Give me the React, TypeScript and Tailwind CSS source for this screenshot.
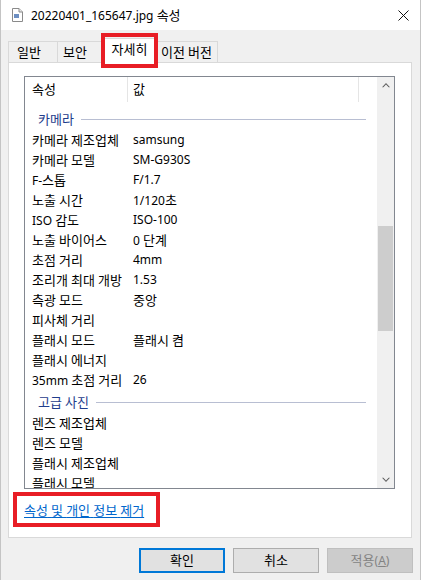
import React from 'react';

type Row = { label: string; value?: string };

const cameraRows: Row[] = [
  { label: '카메라 제조업체', value: 'samsung' },
  { label: '카메라 모델', value: 'SM-G930S' },
  { label: 'F-스톱', value: 'F/1.7' },
  { label: '노출 시간', value: '1/120초' },
  { label: 'ISO 감도', value: 'ISO-100' },
  { label: '노출 바이어스', value: '0 단계' },
  { label: '초점 거리', value: '4mm' },
  { label: '조리개 최대 개방', value: '1.53' },
  { label: '측광 모드', value: '중앙' },
  { label: '피사체 거리' },
  { label: '플래시 모드', value: '플래시 켬' },
  { label: '플래시 에너지' },
  { label: '35mm 초점 거리', value: '26' },
];

const advancedRows: Row[] = [
  { label: '렌즈 제조업체' },
  { label: '렌즈 모델' },
  { label: '플래시 제조업체' },
  { label: '플래시 모델' },
  { label: '플래시 일련 번호' },
];

// Hangul runs get a slightly larger size so they match Malgun Gothic widths
function K({ t }: { t: string }) {
  const parts = t.split(/([\uAC00-\uD7A3]+)/);
  return (
    <span className="whitespace-pre">
      {parts.map((p, i) =>
        /[\uAC00-\uD7A3]/.test(p) ? (
          <span key={i} className="text-[13px]">
            {p}
          </span>
        ) : (
          <React.Fragment key={i}>{p}</React.Fragment>
        ),
      )}
    </span>
  );
}

function GroupRow({ title }: { title: string }) {
  return (
    <div className="h-[23px] shrink-0 flex items-end pb-[3px] pl-[13px] pr-[11px]">
      <div className="flex items-center w-full h-[16px]">
        <span className="text-[#1e3c8c] whitespace-nowrap">
          <K t={title} />
        </span>
        <div className="flex-1 h-px bg-[#b8bed2] ml-[7px]" />
      </div>
    </div>
  );
}

function PropRow({ row }: { row: Row }) {
  return (
    <div className="h-[20px] shrink-0 flex items-center">
      <div className="w-[103px] pl-[7px] whitespace-nowrap overflow-hidden">
        <K t={row.label} />
      </div>
      <div className="pl-[5px] whitespace-nowrap">
        <K t={row.value ?? ''} />
      </div>
    </div>
  );
}

function FileIcon() {
  return (
    <svg width="11" height="14" viewBox="0 0 11 14">
      <path d="M0.5 0.5 H7 L10.5 4 V13.5 H0.5 Z" fill="#fff" stroke="#8a8a8a" />
      <path d="M7 0.5 V4 H10.5" fill="#e6e6e6" stroke="#8a8a8a" />
      <rect x="2" y="6" width="5" height="4" fill="#6d8fc2" />
    </svg>
  );
}

function Chevron({ down }: { down?: boolean }) {
  return (
    <svg width="8" height="5" viewBox="0 0 8 5" className={down ? 'rotate-180' : ''}>
      <path d="M0 4.2 L4 0 L8 4.2 L6.6 4.2 L4 1.6 L1.4 4.2 Z" fill="#606060" />
    </svg>
  );
}

export default function App() {
  return (
    <div
      className="relative w-[421px] h-[580px] bg-[#f0f0f0] flex flex-col border-l border-[#3a3a3a] border-r border-[#c4c4c4] overflow-hidden text-[12px] leading-[16px] text-black"
      style={{ fontFamily: '"Noto Sans", "Noto Sans CJK KR", sans-serif' }}
    >
      {/* Title bar */}
      <div className="h-[30px] bg-white flex items-center pl-[11px] shrink-0">
        <FileIcon />
        <span className="ml-[8px] text-[12px]">
          <K t="20220401_165647.jpg 속성" />
        </span>
        <svg width="11" height="11" viewBox="0 0 11 11" className="ml-auto mr-[11px]">
          <path d="M0.5 0.5 L10.5 10.5 M10.5 0.5 L0.5 10.5" stroke="#111" strokeWidth="1" />
        </svg>
      </div>

      {/* Tabs */}
      <div className="mt-[8px] ml-[7px] h-[24px] flex items-end shrink-0 relative z-10">
        <div className="w-[50px] h-[21px] border border-b-0 border-[#d9d9d9] bg-[#f0f0f0] flex items-center pl-[8px]">
          <K t="일반" />
        </div>
        <div className="-ml-px w-[45px] h-[21px] border border-b-0 border-[#d9d9d9] bg-[#f0f0f0] flex items-center pl-[5px]">
          <K t="보안" />
        </div>
        <div className="-ml-px w-[57px] h-[25px] -mb-px border border-b-0 border-[#d9d9d9] bg-white flex items-start pt-[2px] justify-center">
          <K t="자세히" />
        </div>
        <div className="-ml-px w-[61px] h-[21px] border border-b-0 border-[#d9d9d9] bg-[#f0f0f0] flex items-center pl-[3px]">
          <K t="이전 버전" />
        </div>
      </div>

      {/* Tab panel */}
      <div className="ml-[7px] w-[404px] h-[476px] shrink-0 bg-white border border-[#d9d9d9] pl-[15px] pt-[13px] flex flex-col">
        <div className="w-[371px] h-[413px] shrink-0 border border-[#828790] flex overflow-hidden">
          <div className="flex-1 flex flex-col overflow-hidden">
            <div className="h-[26px] flex shrink-0">
              <div className="w-[103px] border-r border-[#e5e5e5] pl-[7px] flex items-center mb-[1px]">
                <K t="속성" />
              </div>
              <div className="w-[231px] border-r border-[#e5e5e5] pl-[5px] flex items-center mb-[1px]">
                <K t="값" />
              </div>
            </div>
            <div className="h-[4px] shrink-0" />
            <GroupRow title="카메라" />
            {cameraRows.map(r => (
              <PropRow key={r.label} row={r} />
            ))}
            <GroupRow title="고급 사진" />
            {advancedRows.map(r => (
              <PropRow key={r.label} row={r} />
            ))}
          </div>
          <div className="w-[17px] bg-[#f0f0f0] flex flex-col shrink-0">
            <div className="h-[17px] shrink-0 flex items-center justify-center">
              <Chevron />
            </div>
            <div className="h-[132px] shrink-0" />
            <div className="h-[105px] shrink-0 mx-[1px] bg-[#cdcdcd]" />
            <div className="flex-1" />
            <div className="h-[17px] shrink-0 flex items-center justify-center">
              <Chevron down />
            </div>
          </div>
        </div>
        <div className="mt-[13px]">
          <span className="text-[#0066cc] underline underline-offset-2">
            <K t="속성 및 개인 정보 제거" />
          </span>
        </div>
      </div>

      {/* Buttons */}
      <div className="mt-[10px] flex justify-end gap-[8px] pr-[7px]">
        <div className="w-[86px] h-[25px] bg-[#e1e1e1] border-2 border-[#0078d7] flex items-center justify-center">
          <K t="확인" />
        </div>
        <div className="w-[86px] h-[25px] bg-[#e1e1e1] border border-[#adadad] flex items-center justify-center">
          <K t="취소" />
        </div>
        <div className="w-[86px] h-[25px] bg-[#cccccc] border border-[#bfbfbf] flex items-center justify-center text-[#838383]">
          <span>
            <K t="적용" />(<span className="underline">A</span>)
          </span>
        </div>
      </div>

      {/* Red highlight boxes */}
      <div className="absolute left-[100px] top-[33px] w-[57px] h-[35px] border-4 border-[#e81d25] z-20" />
      <div className="absolute left-[12px] top-[492px] w-[147px] h-[35px] border-4 border-[#e81d25] z-20" />
    </div>
  );
}
